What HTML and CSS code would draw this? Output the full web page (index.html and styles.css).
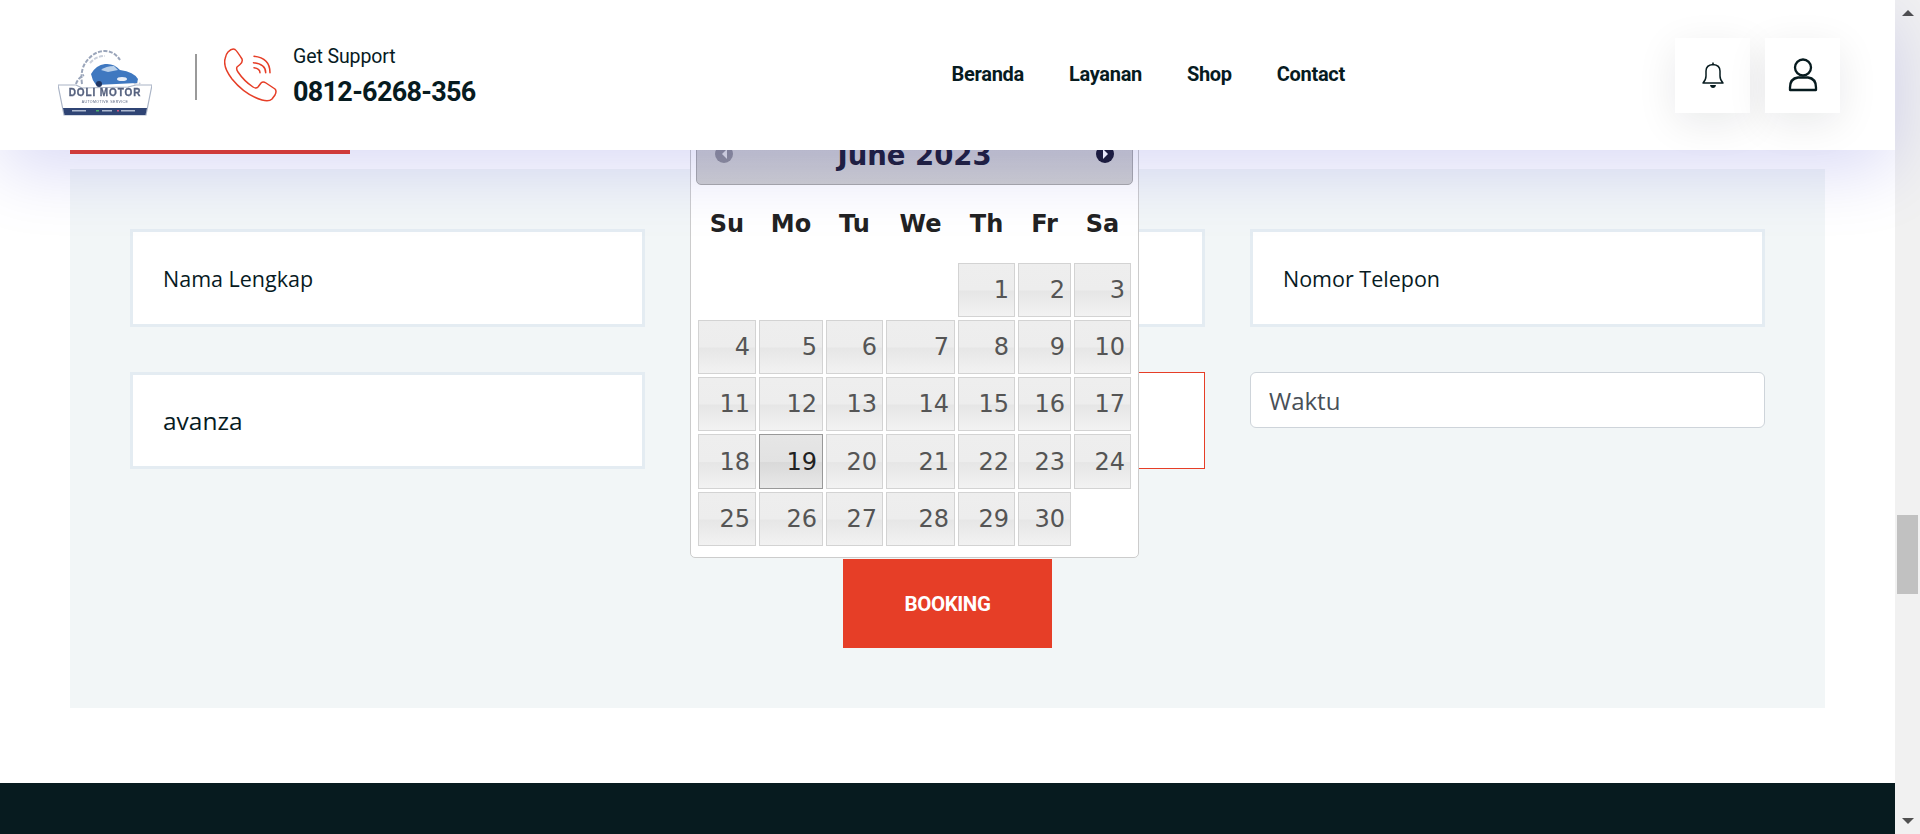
FILE: index.html
```html
<!DOCTYPE html>
<html lang="id">
<head>
    <meta charset="UTF-8">
    <meta name="viewport" content="width=device-width, initial-scale=1.0">
    <title>Doli Motor - Booking</title>
    <link rel="stylesheet" href="styles.css">
</head>
<body>
    <div class="page">
        <header class="site-header">
            <a class="logo" href="#">
                <svg width="94" height="67" viewBox="0 0 94 67">
                    <g fill="none" stroke="#9aa5ba" stroke-width="2" stroke-dasharray="4 1.500">
                        <path d="M24 34 Q22 20 28 12 Q36 1 47 1 Q56 1 62 10"/>
                        <path d="M18 34 Q20 28 26 25"/>
                        <path d="M32 13 Q38 6 47 6" stroke="#c9cfdb"/>
                        <path d="M76 34 Q80 31 82 34" stroke="#c9cfdb"/>
                    </g>
                    <path d="M33 24 Q38 15 47 14 Q56 13 62 20 Q76 22 80 29 L79 33 L38 35 Q34 30 33 24Z" fill="#3f78c0"/>
                    <path d="M43 20 Q48 16 56 16 L60 20 L50 22Z" fill="#b9d0ea"/>
                    <circle cx="41" cy="34" r="3" fill="#1f3562"/>
                    <ellipse cx="64" cy="29" rx="5" ry="2" fill="#e8eef7"/>
                    <path d="M0 35 L18 35 L24 38 L70 37 L78 35 L94 35 L88 65 L6 65Z" fill="#fff" stroke="#aab4c6" stroke-width="1.200"/>
                    <path d="M5 58 L89 58 L87.500 65 L6.500 65Z" fill="#2f4474"/>
                    <text class="logo-name" x="47" y="46" text-anchor="middle">DOLI MOTOR</text>
                    <text class="logo-sub" x="47" y="53" text-anchor="middle">AUTOMOTIVE SERVICE</text>
                    <rect x="14" y="60" width="14" height="1.500" fill="#aeb9d0"/>
                    <rect x="38" y="60" width="3" height="1.500" fill="#4cae6a"/>
                    <rect x="44" y="60" width="10" height="1.500" fill="#aeb9d0"/>
                    <rect x="59" y="60" width="2" height="1.500" fill="#d0567e"/>
                    <rect x="63" y="60" width="14" height="1.500" fill="#aeb9d0"/>
                </svg>
            </a>
            <div class="support">
                <svg class="phone-icon" width="56" height="56" viewBox="225 45 56 56" fill="none" stroke="#e63e27" stroke-width="1.500" stroke-linejoin="round" stroke-linecap="round">
                    <path d="M229 50 Q233 46 236 47.500 Q238 49 243 57 Q244 60 241 62.500 L238 65 Q237 67 239 70 Q245 79 254 85 Q257 87 259 85 L262 81 Q264 79 267 81 L276 87 Q278 89 276 93 L273 97 Q270 100 263 98 Q246 93 233 77 Q224 65 226 57 Q227 52 229 50Z"/>
                    <path d="M255 54.300 Q271 56 271 70.700"/>
                    <path d="M254.500 60.700 Q266.700 62 266.700 70.700"/>
                    <path d="M255 65.700 Q261 66.500 261 70.700"/>
                </svg>
                <div class="support-text">
                    <div class="support-label">Get Support</div>
                    <div class="support-phone">0812-6268-356</div>
                </div>
            </div>
            <nav class="main-nav">
                <a href="#">Beranda</a>
                <a href="#">Layanan</a>
                <a href="#">Shop</a>
                <a href="#">Contact</a>
            </nav>
            <div class="header-actions">
                <a class="icon-btn" href="#">
                    <svg width="24" height="28" viewBox="0 0 24 28" fill="none" stroke="#071b1f" stroke-width="1.500">
                        <path d="M2 22 Q5 19 5 15 L5 10 Q5 4 12 3.500 Q19 4 19 10 L19 15 Q19 19 22 22Z" stroke-linejoin="round"/>
                        <path d="M12 1.500 V3.500"/>
                        <path d="M9 24 H15 Q14.500 27 12 27 Q9.500 27 9 24Z" fill="#071b1f" stroke="none"/>
                    </svg>
                </a>
                <a class="icon-btn" href="#">
                    <svg width="30" height="34" viewBox="0 0 30 34" fill="none" stroke="#071b1f" stroke-width="2.300">
                        <circle cx="15" cy="9.500" r="8"/>
                        <path d="M2 32 V29.500 Q2 20.500 10 19.500 H20 Q28 20.500 28 29.500 V32Z" stroke-linejoin="round"/>
                    </svg>
                </a>
            </div>
        </header>

        <main class="booking">
            <div class="tab-line"></div>
            <form class="booking-panel">
                <div class="field-grid">
                    <input class="field" type="text" placeholder="Nama Lengkap">
                    <input class="field" type="text">
                    <input class="field" type="text" placeholder="Nomor Telepon">
                    <input class="field field-value" type="text" value="avanza">
                    <input class="field field-focus" type="text">
                    <input class="field-small" type="text" placeholder="Waktu">
                </div>
                <button class="btn-booking" type="button">BOOKING</button>
            </form>
        </main>

        <div class="datepicker">
            <div class="dp-title">
                <span class="dp-nav dp-prev"></span>
                <span class="dp-month">June 2023</span>
                <span class="dp-nav dp-next"></span>
            </div>
            <table class="dp-table">
                <colgroup>
                    <col class="c58"><col class="c64"><col class="c57"><col class="c69"><col class="c57"><col class="c53"><col class="c57">
                </colgroup>
                <thead>
                    <tr><th>Su</th><th>Mo</th><th>Tu</th><th>We</th><th>Th</th><th>Fr</th><th>Sa</th></tr>
                </thead>
                <tbody>
                    <tr><td class="empty"></td><td class="empty"></td><td class="empty"></td><td class="empty"></td><td>1</td><td>2</td><td>3</td></tr>
                    <tr><td>4</td><td>5</td><td>6</td><td>7</td><td>8</td><td>9</td><td>10</td></tr>
                    <tr><td>11</td><td>12</td><td>13</td><td>14</td><td>15</td><td>16</td><td>17</td></tr>
                    <tr class="tall"><td>18</td><td class="today">19</td><td>20</td><td>21</td><td>22</td><td>23</td><td>24</td></tr>
                    <tr><td>25</td><td>26</td><td>27</td><td>28</td><td>29</td><td>30</td><td class="empty"></td></tr>
                </tbody>
            </table>
        </div>

        <footer class="site-footer"></footer>
    </div>

    <div class="scrollbar">
        <span class="arrow-up"></span>
        <span class="thumb"></span>
        <span class="arrow-down"></span>
    </div>
</body>
</html>
```

FILE: styles.css
```css
* {
    box-sizing: border-box;
}
body {
    margin: 0;
    height: 100vh;
    display: flex;
    overflow: hidden;
    background-color: #fff;
    color: #071b1f;
    font-family: 'Open Sans', sans-serif;
}
a {
    color: inherit;
    text-decoration: none;
}
.page {
    flex: 1;
    position: relative;
    min-width: 0;
}

/* header */
.site-header {
    position: relative;
    z-index: 3;
    height: 150px;
    display: flex;
    align-items: center;
    padding: 0 55px 0 58px;
    background-color: #fff;
    box-shadow: 0 20px 70px rgba(6, 6, 193, 0.15);
}
.logo {
    display: flex;
    margin-top: 17px;
}
.logo svg {
    filter: blur(0.6px);
}
.logo-name {
    font-family: 'Liberation Sans', sans-serif;
    font-weight: bold;
    font-size: 10px;
    letter-spacing: 0.9px;
    fill: #56627f;
    stroke: #56627f;
    stroke-width: 0.3px;
}
.logo-sub {
    font-family: 'Liberation Sans', sans-serif;
    font-size: 3.5px;
    letter-spacing: 0.4px;
    fill: #56627f;
}
.support {
    display: flex;
    align-items: center;
    margin-left: 43px;
    padding-left: 29px;
    position: relative;
    gap: 13px;
    height: 56px;
}
.support::before {
    content: "";
    width: 2px;
    height: 46px;
    background-color: #9a9a9a;
    position: absolute;
    left: 0;
    top: 7px;
}
.support-text {
    padding-top: 3px;
}
.support-label {
    font-family: Roboto, sans-serif;
    font-size: 19.5px;
    line-height: 22px;
    letter-spacing: -0.1px;
}
.support-phone {
    font-family: Roboto, sans-serif;
    font-weight: 700;
    font-size: 27px;
    line-height: 30px;
    margin-top: 9px;
    letter-spacing: -0.7px;
}
.main-nav {
    display: flex;
    gap: 45px;
    margin-left: 476px;
    margin-top: -2px;
    font-family: Roboto, sans-serif;
    font-weight: 700;
    font-size: 20px;
    letter-spacing: -0.3px;
}
.header-actions {
    display: flex;
    gap: 15px;
    margin-left: auto;
}
.icon-btn {
    width: 75px;
    height: 75px;
    display: flex;
    align-items: center;
    justify-content: center;
    background-color: #fff;
    box-shadow: 0 10px 40px rgba(7, 27, 31, 0.09);
}

/* booking form */
.booking {
    padding: 0 70px;
}
.tab-line {
    position: relative;
    z-index: 4;
    width: 280px;
    height: 4px;
    background-color: #cf3b3b;
}
.booking-panel {
    margin-top: 15px;
    padding: 60px;
    background-color: #f2f6f7;
}
.field-grid {
    display: grid;
    grid-template-columns: repeat(3, 515px);
    grid-template-rows: 98px 97px;
    gap: 45px;
    align-items: start;
}
.field {
    width: 100%;
    height: 100%;
    padding: 1px 30px 0;
    border: 3px solid #e4ecf2;
    border-radius: 0;
    background-color: #fff;
    font-family: 'Open Sans', sans-serif;
    font-size: 21.5px;
    font-weight: 500;
    color: #071b1f;
    outline: none;
}
.field::placeholder {
    color: #071b1f;
    opacity: 1;
}
.field-value {
    padding-top: 0;
    font-size: 24.5px;
}
.field-focus {
    border: 1px solid #e63e27;
}
.field-small {
    width: 100%;
    height: 56px;
    padding: 0 18px;
    border: 1px solid #ced4da;
    border-radius: 6px;
    background-color: #fff;
    font-family: 'Open Sans', sans-serif;
    font-size: 24px;
    color: #495057;
}
.field-small::placeholder {
    color: #495057;
    opacity: 1;
}
.btn-booking {
    display: block;
    width: 209px;
    height: 89px;
    margin: 90px auto 0;
    border: none;
    background-color: #e63e27;
    color: #fff;
    font-family: Roboto, sans-serif;
    font-weight: 700;
    font-size: 20.5px;
    letter-spacing: -0.4px;
}

/* calendar popup, sits over the form and under the header */
.datepicker {
    position: absolute;
    z-index: 2;
    left: 690px;
    top: 122px;
    width: 449px;
    padding: 3px 5px 8px;
    border: 1px solid #ccc;
    border-radius: 5px;
    background-color: #fff;
    font-family: 'DejaVu Sans', Verdana, sans-serif;
}
.dp-title {
    height: 59px;
    display: flex;
    align-items: center;
    justify-content: space-between;
    padding: 0 18px;
    border: 1px solid #aaa;
    border-radius: 5px;
    background: linear-gradient(#cccccc, #d0d0d0);
}
.dp-month {
    font-size: 27.5px;
    font-weight: bold;
    color: #222238;
    margin-top: -2px;
}
.dp-nav {
    width: 18px;
    height: 18px;
    border-radius: 50%;
    background-color: #1f1f33;
    margin-top: -4px;
    display: flex;
    align-items: center;
    justify-content: center;
}
.dp-prev {
    opacity: 0.35;
}
.dp-prev::after {
    content: "";
    border: 5px solid transparent;
    border-left: none;
    border-right-color: #fff;
}
.dp-next::after {
    content: "";
    border: 5px solid transparent;
    border-right: none;
    border-left-color: #fff;
}
.dp-table {
    width: 439px;
    margin: 0 -1px;
    table-layout: fixed;
    border-collapse: separate;
    border-spacing: 3px;
}
.c58 { width: 58px; }
.c64 { width: 64px; }
.c57 { width: 57px; }
.c69 { width: 69px; }
.c53 { width: 53px; }
.dp-table th {
    height: 72px;
    padding: 0;
    font-size: 24px;
    font-weight: bold;
    color: #222;
}
.dp-table td {
    height: 54px;
    padding: 0 5px 0 0;
    text-align: right;
    font-size: 24px;
    color: #555;
    border: 1px solid #d3d3d3;
    background: linear-gradient(#eeeeee, #ededed 50%, #e6e6e6 52%, #f2f2f2);
}
.dp-table .tall td {
    height: 55px;
}
.dp-table td.empty {
    border: none;
    background: none;
}
.dp-table td.today {
    color: #212121;
    border-color: #999;
    background: linear-gradient(#e6e6e6, #e2e2e2 50%, #d9d9d9 52%, #e8e8e8);
}

.site-footer {
    height: 51px;
    margin-top: 75px;
    background-color: #071b1f;
}

/* window scrollbar */
.scrollbar {
    width: 25px;
    flex: none;
    display: flex;
    flex-direction: column;
    align-items: center;
    background-color: #f1f1f1;
}
.arrow-up {
    margin-top: 10px;
    border: 6px solid transparent;
    border-top: none;
    border-bottom-color: #505050;
}
.thumb {
    width: 21px;
    height: 79px;
    margin-top: 499px;
    background-color: #c1c1c1;
}
.arrow-down {
    margin-top: auto;
    margin-bottom: 10px;
    border: 6px solid transparent;
    border-bottom: none;
    border-top-color: #505050;
}
```
